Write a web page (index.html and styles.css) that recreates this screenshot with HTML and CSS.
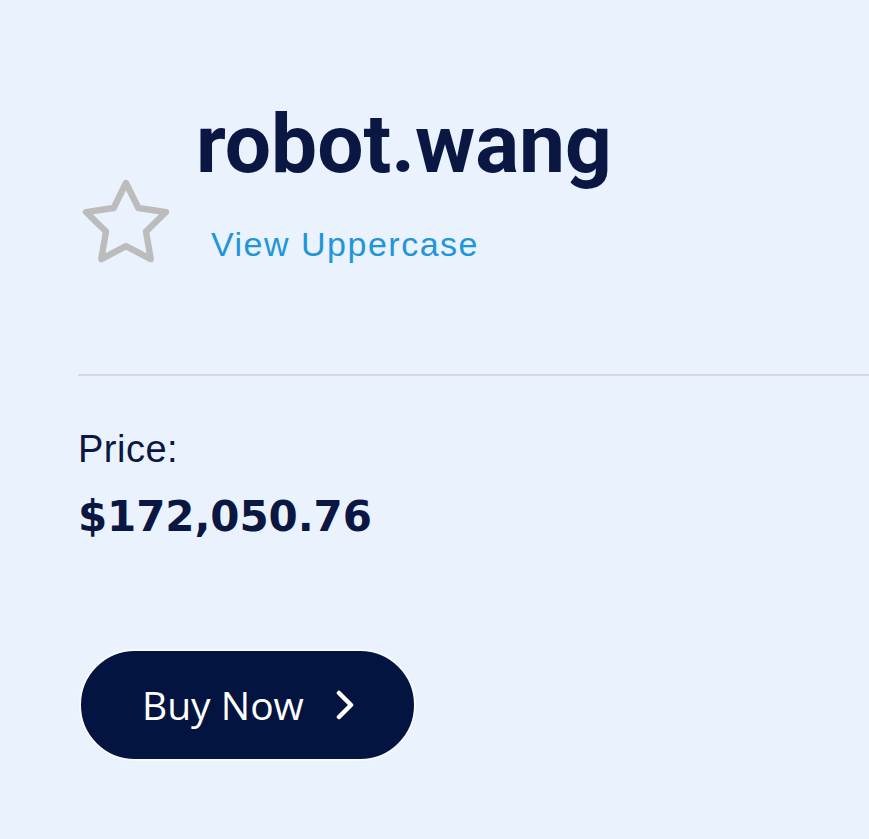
FILE: index.html
```html
<!DOCTYPE html>
<html lang="en">
<head>
<meta charset="utf-8">
<title>robot.wang</title>
<link rel="stylesheet" href="styles.css">
</head>
<body>
<main class="page">
  <header class="name-row">
    <svg class="star" viewBox="0 0 24 24" width="96" height="96" aria-hidden="true">
      <polygon points="12 2 15.09 8.26 22 9.27 17 14.14 18.18 21.02 12 17.77 5.82 21.02 7 14.14 2 9.27 8.91 8.26" fill="none" stroke="#bcbcbc" stroke-width="1.6" stroke-linejoin="round"/>
    </svg>
    <div class="names">
      <h1 class="title">robot.wang</h1>
      <a class="link" href="#">View Uppercase</a>
    </div>
  </header>
  <hr class="divider">
  <section class="price">
    <div class="price-label">Price:</div>
    <div class="price-value">$172,050.76</div>
  </section>
  <button class="buy" type="button">
    <span class="buy-text">Buy Now</span>
    <svg class="chevron" viewBox="0 0 18 30" width="18" height="30" aria-hidden="true">
      <polyline points="3 3 15 15 3 27" fill="none" stroke="#ffffff" stroke-width="4.5" stroke-linecap="round" stroke-linejoin="round"/>
    </svg>
  </button>
</main>
</body>
</html>
```
FILE: styles.css
```css
html, body {
  margin: 0;
  padding: 0;
  background: #eaf2fe;
}

.page {
  padding-left: 78px;
  padding-top: 103px;
  padding-bottom: 40px;
  color: #0a1742;
}

.name-row {
  display: flex;
  align-items: flex-start;
  height: 161px;
}

.star {
  display: block;
  flex: none;
  margin-top: 72px;
}

.names {
  display: flex;
  flex-direction: column;
  align-items: flex-start;
  margin-left: 22px;
}

.title {
  margin: 0;
  font-family: Roboto, "Liberation Sans", sans-serif;
  font-weight: 700;
  font-size: 82px;
  line-height: 82px;
  color: #0a1742;
}

.link {
  display: block;
  margin-top: 39px;
  margin-left: 15px;
  font-family: "Liberation Sans", Arial, sans-serif;
  font-size: 34px;
  line-height: 40px;
  letter-spacing: 1.5px;
  color: #1f96d8;
  text-decoration: none;
}

.divider {
  margin: 110px 0 0 0;
  border: none;
  height: 2px;
  background: #d6dade;
}

.price {
  margin-top: 51px;
}

.price-label {
  font-family: "Liberation Sans", Arial, sans-serif;
  font-size: 38px;
  line-height: 44px;
  letter-spacing: 0.5px;
  color: #0a1742;
}

.price-value {
  margin-top: 22px;
  font-family: "DejaVu Sans", "Liberation Sans", sans-serif;
  font-weight: 700;
  font-size: 42px;
  line-height: 48px;
  letter-spacing: -0.1px;
  color: #0a1742;
}

.buy {
  margin-top: 108px;
  margin-left: 1px;
  display: inline-flex;
  align-items: center;
  gap: 32px;
  box-sizing: border-box;
  height: 112px;
  padding: 0 60px 0 61px;
  border: 2px solid #f7faff;
  border-radius: 56px;
  background: #041441;
  color: #ffffff;
  cursor: pointer;
}

.buy-text {
  font-family: "Open Sans", "Noto Sans", sans-serif;
  font-size: 39px;
  line-height: 44px;
}

.chevron {
  display: block;
  flex: none;
}
```
